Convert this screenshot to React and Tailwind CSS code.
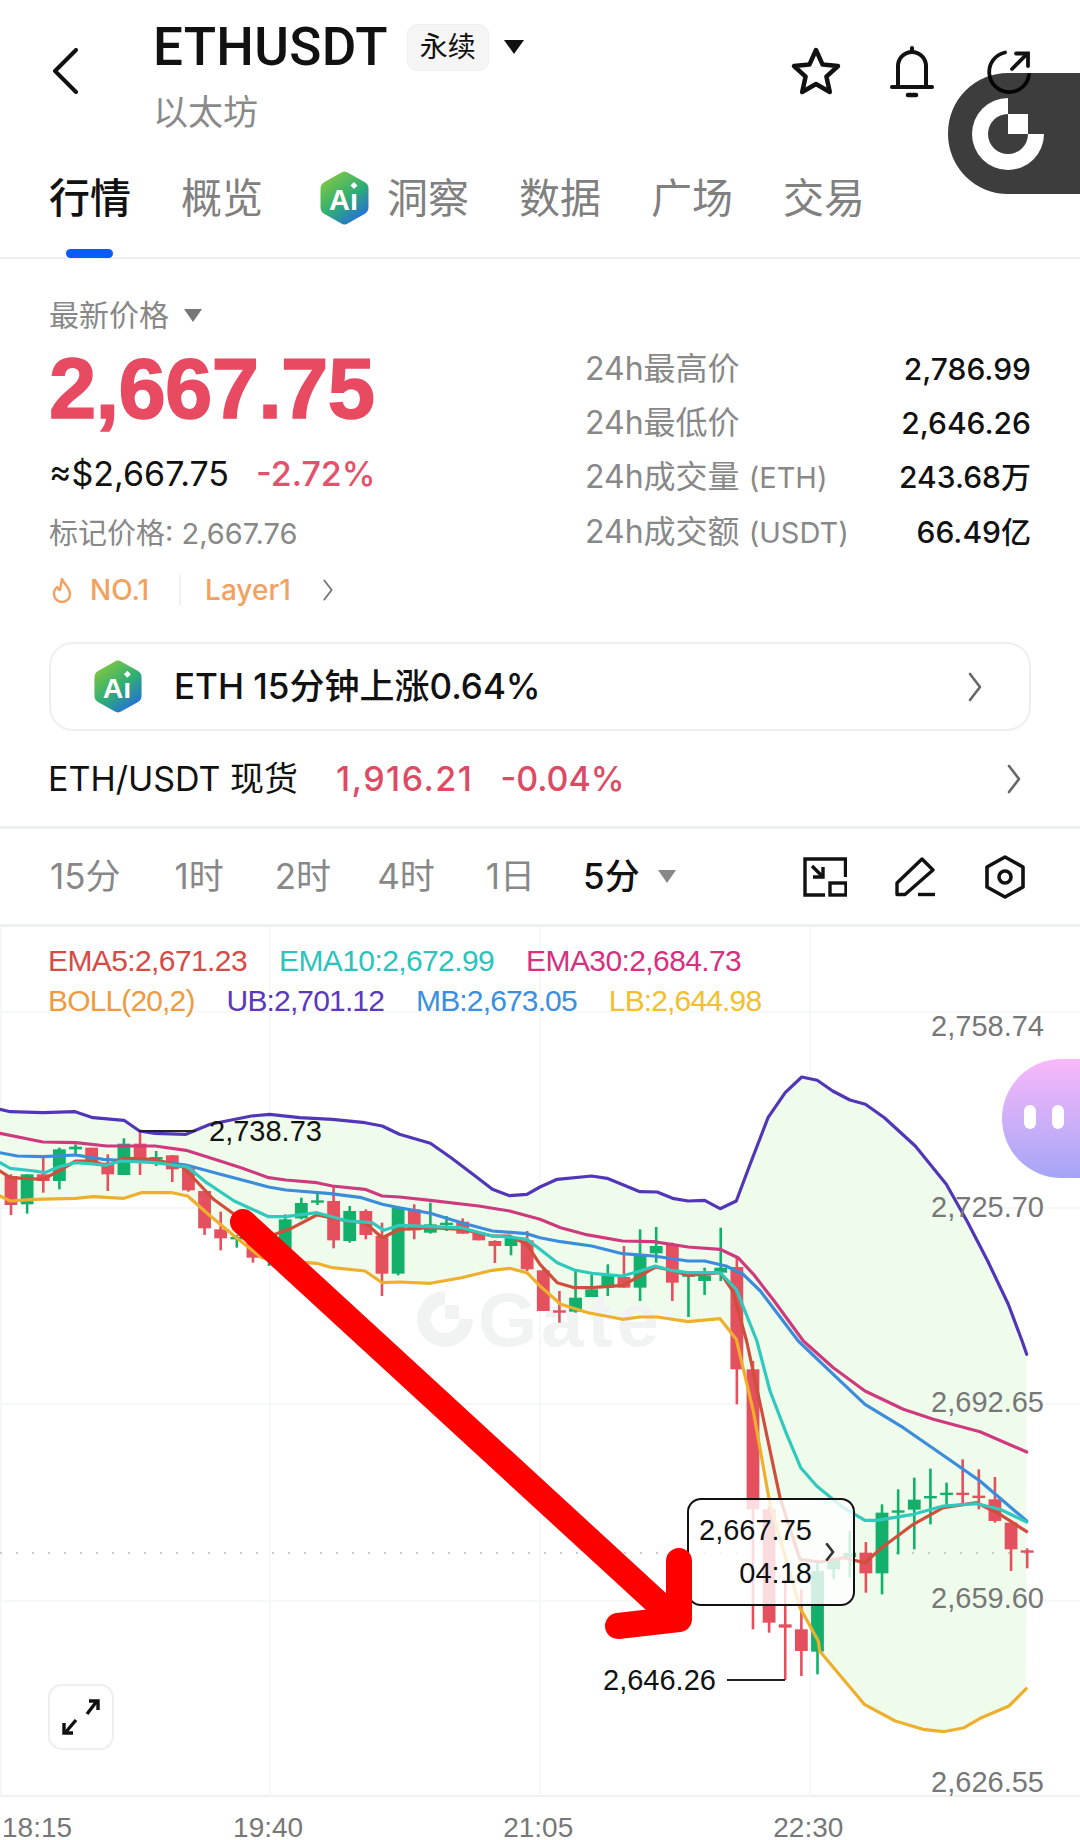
import React from "react";

// chart numbers were read off the reference, groups are [x, y] in crop units
const from4 = ([x, y]) => [x / 2.904, 1080 + y / 3];
const from5 = ([x, y]) => [540 + x / 2.904, 1040 + y / 3];
const from6 = ([x, y]) => [580 + x / 3, 1340 + y / 3];
const from7 = ([x, y]) => [x / 1.452, 1640 + y / 3];

const build = (a, b, c, d = []) => [
  ...a.map(from4),
  ...b.map(from5),
  ...c.map(from6),
  ...d.map(from7),
];

const ub = build(
  [[0,85],[30,92],[125,95],[218,92],[270,110],[360,118],[405,150],[450,157],[540,160],[610,130],[730,105],[783,100],[870,110],[965,115],[1060,125],[1110,135],[1160,160],[1250,187],[1310,230],[1380,285],[1430,325],[1480,344],[1530,340]],
  [[0,438],[50,415],[150,405],[195,412],[290,452],[340,453],[385,472],[430,480],[478,478],[523,503],[570,480],[610,370],[662,230],[712,155],[760,108],[805,118],[850,150],[900,177],[945,190],[1000,230],[1090,315],[1180,430],[1240,540],[1300,660],[1360,790],[1400,900]],
  [[1340,40]]
);
const lb = build(
  [[0,345],[30,360],[100,355],[220,352],[270,347],[360,352],[410,335],[500,335],[545,345],[600,395],[680,465],[760,530],[830,540],[920,547],[965,560],[1060,570],[1110,605],[1160,603],[1250,607],[1340,590],[1430,568],[1480,562],[1530,575]],
  [[0,735],[60,790],[140,815],[240,835],[290,828],[340,828],[430,842],[523,833],[570,895]],
  [[520,210],[570,490],[660,800],[715,900]],
  [[1190,30],[1255,190],[1300,240],[1340,265],[1370,272],[1400,260],[1425,230],[1465,195],[1490,143]]
);
const ema30 = build(
  [[0,157],[125,183],[220,185],[310,195],[450,195],[540,208],[630,237],[700,260],[780,290],[830,297],[920,305],[965,315],[1060,325],[1110,345],[1160,348],[1250,358],[1390,375],[1480,390]],
  [[0,535],[60,560],[130,580],[240,600],[330,602],[430,618],[523,625],[575,650],[620,700],[680,780],[765,900]],
  [[760,80],[855,150],[970,205],[1060,235],[1200,272],[1340,333]]
);
const mb = build(
  [[0,215],[50,225],[125,227],[220,222],[300,235],[350,238],[450,240],[540,252],[640,280],[780,318],[830,327],[960,338],[1050,350],[1110,370],[1160,380],[1250,397],[1340,425],[1430,450],[1530,458]],
  [[0,590],[60,602],[150,615],[240,638],[330,645],[430,660],[478,660],[540,675],[590,700],[640,750],[750,900]],
  [[760,100],[855,190],[970,260],[1100,350],[1200,420],[1340,540]]
);
const ema10 = build(
  [[0,245],[30,262],[100,270],[130,275],[170,258],[218,245],[260,248],[310,253],[350,240],[450,245],[545,258],[600,305],[680,360],[780,407],[830,407],[920,395],[1010,420],[1080,425],[1115,448],[1160,433],[1250,437],[1340,440],[1430,465],[1480,468],[1530,475]],
  [[0,625],[50,665],[100,687],[150,697],[240,705],[290,690],[335,675],[380,688],[430,695],[523,695],[570,745],[630,900]],
  [[570,150],[620,280],[662,380],[710,435],[790,500],[855,538],[890,538],[1000,520],[1090,495],[1190,488],[1260,505],[1340,543]]
);
const ema5 = build(
  [[0,270],[30,290],[125,295],[170,270],[220,240],[270,240],[310,255],[360,232],[450,235],[530,258],[570,300],[620,355],[680,400],[785,465],[850,440],[920,402],[1010,420],[1060,425],[1110,470],[1160,445],[1250,440],[1340,445],[1430,465],[1480,465],[1530,490]],
  [[0,670],[50,725],[100,740],[150,740],[240,733],[290,705],[335,678],[380,688],[430,703],[523,695],[560,750],[600,900]],
  [[545,210],[600,470],[660,655],[720,663],[790,650],[855,665],[905,620],[1000,550],[1090,500],[1190,485],[1260,520],[1340,572]]
);

// wick top, wick bottom, body top, body bottom, up?
const candlesA = [
  [280,402,285,372,0],[280,398,280,370,1],[230,335,280,300,0],[200,325,205,300,1],[190,225,197,205,1],[200,240,200,240,0],
  [220,330,245,280,0],[172,282,188,282,1],[150,282,188,232,0],[210,255,228,235,1],[222,303,223,265,0],[262,332,262,328,0],
  [330,462,330,442,0],[392,508,445,472,0],[462,500,468,472,1],[470,545,480,530,0],[480,555,480,530,1],[400,520,415,510,1],
  [350,415,366,412,1],[335,372,358,364,1],[315,502,360,478,0],[375,485,390,480,1],[385,475,390,462,0],[425,645,465,578,0],
  [380,583,380,578,1],[370,475,385,448,0],[365,458,430,455,1],[405,450,425,430,1],[412,458,422,458,0],[450,478,455,478,0],
  [478,546,480,495,0],[465,523,470,495,1],[450,570,478,565,0],[565,690,568,690,0],
];
const candlesB = [
  [750,845,808,815,0],[690,815,770,812,1],[700,768,745,768,1],[670,765,703,740,1],[615,740,708,740,0],[565,780,640,740,1],
  [558,665,615,637,1],[605,780,610,725,0],[695,828,700,705,1],[680,762,703,720,1],[560,720,680,695,1],
];
const candlesC = [
  [-250,190,-222,85,0],[60,865,85,505,0],[495,875,505,845,0],[720,1017,850,860,0],[745,1005,865,930,0],[660,1000,690,932,1],
  [650,715,655,685,1],[570,710,635,648,1],[603,755,635,697,0],[490,760,515,697,1],[445,640,508,514,1],[410,625,476,506,1],
  [383,550,465,470,1],[425,495,455,460,1],[355,490,455,460,0],[385,505,464,470,0],[408,545,475,540,0],[540,690,545,625,0],
  [622,682,628,634,0],
];
const candles = [
  ...candlesA.map((c) => [1080, c]),
  ...candlesB.map((c) => [1040, c]),
  ...candlesC.map((c) => [1340, c]),
];

const pts = (list) => list.map(([x, y]) => `${x.toFixed(1)},${y.toFixed(1)}`).join(" ");

function AiBadge({ id, className }) {
  return (
    <svg viewBox="0 0 50 56" className={className}>
      <defs>
        <linearGradient id={id} x1="0.1" y1="0" x2="0.8" y2="1">
          <stop offset="0" stopColor="#8ccb3c" />
          <stop offset="0.55" stopColor="#2fae74" />
          <stop offset="1" stopColor="#2468e4" />
        </linearGradient>
      </defs>
      <path d="M21 3 Q25 0 29 3 L45 12 Q49 14 49 19 L49 37 Q49 42 45 44 L29 53 Q25 56 21 53 L5 44 Q1 42 1 37 L1 19 Q1 14 5 12 Z" fill={`url(#${id})`} />
      <text x="24" y="40" textAnchor="middle" fontSize="29" fontWeight="700" fill="#fff" fontFamily="Liberation Sans, sans-serif">
        Aı
      </text>
      <path d="M34.5 12 L38 15.5 L34.5 19 L31 15.5 Z" fill="#fff" />
    </svg>
  );
}

function Chevron({ className, weight = 2.6 }) {
  return (
    <svg viewBox="0 0 16 30" className={className} fill="none" stroke="currentColor" strokeWidth={weight} strokeLinecap="round" strokeLinejoin="round">
      <path d="M3 2 L13 15 L3 28" />
    </svg>
  );
}

function Chart() {
  return (
    <div className="relative h-[870px] border-b-2 border-[#eeeff0] font-['Liberation_Sans','Noto_Sans_CJK_SC',sans-serif]">
      <svg viewBox="0 926 1080 870" className="absolute left-0 top-0 h-[870px] w-[1080px] overflow-visible">
        <g stroke="#f3f4f5" strokeWidth="1.5">
          <line x1="1" y1="926" x2="1" y2="1796" />
          <line x1="270" y1="926" x2="270" y2="1796" />
          <line x1="540" y1="926" x2="540" y2="1796" />
          <line x1="810" y1="926" x2="810" y2="1796" />
          <line x1="0" y1="1011" x2="1080" y2="1011" />
          <line x1="0" y1="1207" x2="1080" y2="1207" />
          <line x1="0" y1="1403" x2="1080" y2="1403" />
          <line x1="0" y1="1600" x2="1080" y2="1600" />
        </g>
        <polygon points={pts([...ub, ...[...lb].reverse()])} fill="#effcec" />

        {/* watermark */}
        <g fill="#f1f3f3">
          <path d="M445 1290 A28 28 0 1 0 473 1318 L459 1318 A14 14 0 1 1 445 1304 Z" />
          <rect x="445" y="1304" width="14" height="14" />
          <text x="478" y="1345" fontSize="76" fontWeight="700" letterSpacing="4" fontFamily="Liberation Sans, sans-serif">Gate</text>
        </g>

        <line x1="0" y1="1552" x2="1035" y2="1552" stroke="#c9cdd0" strokeWidth="2" strokeDasharray="2 14" />

        {candles.map(([y0, [wt, wb, bt, bb, up]], i) => {
          const x = 11 + 16.13 * i;
          const color = up ? "#13b06b" : "#e5505f";
          return (
            <g key={i} fill={color} stroke="none">
              <rect x={x - 1.3} y={y0 + wt / 3} width="2.6" height={(wb - wt) / 3} />
              <rect x={x - 6.4} y={y0 + bt / 3} width="12.8" height={Math.max((bb - bt) / 3, 2.4)} />
            </g>
          );
        })}

        <g fill="none" strokeWidth="3.2" strokeLinejoin="round" strokeLinecap="round">
          <polyline points={pts(ub)} stroke="#5236b8" />
          <polyline points={pts(lb)} stroke="#eeb02c" />
          <polyline points={pts(ema30)} stroke="#cf3a7f" />
          <polyline points={pts(mb)} stroke="#3b8ddb" />
          <polyline points={pts(ema5)} stroke="#cf4f3c" />
          <polyline points={pts(ema10)} stroke="#2fcabd" />
        </g>

        <line x1="139" y1="1130" x2="196" y2="1130" stroke="#222" strokeWidth="2" />
        <line x1="727" y1="1679" x2="785" y2="1679" stroke="#222" strokeWidth="2" />
        <g fontSize="29" fontFamily="Liberation Sans, sans-serif" fill="#111">
          <text x="209" y="1140">2,738.73</text>
          <text x="603" y="1689">2,646.26</text>
        </g>
        <g fontSize="29" fontFamily="Liberation Sans, sans-serif" fill="#777" textAnchor="end">
          <text x="1044" y="1035">2,758.74</text>
          <text x="1044" y="1216">2,725.70</text>
          <text x="1044" y="1411">2,692.65</text>
          <text x="1044" y="1607">2,659.60</text>
          <text x="1044" y="1791">2,626.55</text>
        </g>
      </svg>

      {/* legend */}
      <div className="relative px-[48px] pt-[14px] text-[30px] leading-[40px]">
        <div className="flex gap-[32px] tracking-[-0.6px]">
          <span className="text-[#d84a45]">EMA5:2,671.23</span>
          <span className="text-[#2bc4bd]">EMA10:2,672.99</span>
          <span className="text-[#d6307f]">EMA30:2,684.73</span>
        </div>
        <div className="flex gap-[32px] tracking-[-0.85px]">
          <span className="text-[#ef9b3b]">BOLL(20,2)</span>
          <span className="text-[#5a39c0]">UB:2,701.12</span>
          <span className="text-[#3a90e0]">MB:2,673.05</span>
          <span className="text-[#f2c02c]">LB:2,644.98</span>
        </div>
      </div>

      {/* current price tag */}
      <div className="absolute left-[687px] top-[571px] flex h-[108px] w-[168px] items-center rounded-[14px] border-2 border-[#111] bg-white/80 pl-[10px]">
        <div className="flex flex-col items-end text-[29px] leading-[43px] text-[#111]">
          <span>2,667.75</span>
          <span>04:18</span>
        </div>
        <Chevron className="ml-[13px] h-[18px] w-[10px] text-[#333]" weight={4.5} />
      </div>

      {/* hand drawn arrow */}
      <svg viewBox="0 926 1080 870" className="absolute left-0 top-0 h-[870px] w-[1080px]">
        <g fill="none" stroke="#ff0000" strokeWidth="26" strokeLinecap="round" strokeLinejoin="round">
          <line x1="243" y1="1221" x2="675" y2="1618" />
          <polyline points="679,1560 679,1618 618,1625" />
        </g>
      </svg>

      <button className="absolute left-[48px] top-[757px] flex h-[66px] w-[66px] items-center justify-center rounded-[14px] border-2 border-[#eeeff0] bg-white">
        <svg viewBox="0 0 38 36" className="h-[36px] w-[38px]" fill="none" stroke="#111" strokeWidth="3.4">
          <path d="M35 2 L25 15" />
          <path d="M27 2 H36 V11" />
          <path d="M3 34 L14 21" />
          <path d="M2 24 V34 H11" />
        </svg>
      </button>
    </div>
  );
}

export default function App() {
  return (
    <div className="relative h-[1840px] w-[1080px] overflow-hidden bg-white font-['Inter','Noto_Sans_CJK_SC',sans-serif] text-[#111]">
      {/* title bar */}
      <div className="flex h-[148px] items-start">
        <svg viewBox="0 0 26 46" className="ml-[52px] mt-[48px] h-[46px] w-[26px]" fill="none" stroke="#111" strokeWidth="4" strokeLinecap="round" strokeLinejoin="round">
          <path d="M24 2 L3 23 L24 44" />
        </svg>
        <div className="ml-[75px] pt-[18px]">
          <div className="flex items-center">
            <span className="font-['Roboto'] text-[53px] font-medium leading-[58px] tracking-[0.3px]">ETHUSDT</span>
            <span className="ml-[19px] flex h-[47px] w-[82px] items-center justify-center rounded-[10px] border border-[#eeeff0] bg-[#f5f5f6] text-[28px]">永续</span>
            <span className="ml-[15px] h-0 w-0 border-x-[10px] border-t-[14px] border-x-transparent border-t-[#111]" />
          </div>
          <div className="mt-[16px] text-[35px] leading-[40px] text-[#8a8a8a]">以太坊</div>
        </div>
        <div className="ml-auto flex items-start pt-[46px]">
          <svg viewBox="0 0 52 50" className="h-[50px] w-[52px]" fill="none" stroke="#111" strokeWidth="4.5" strokeLinejoin="round">
            <path d="M26 4 L32.6 18.6 L48 20 L36.4 30.6 L39.8 46 L26 38 L12.2 46 L15.6 30.6 L4 20 L19.4 18.6 Z" />
          </svg>
          <svg viewBox="0 0 44 52" className="ml-[48px] h-[52px] w-[44px]" fill="none" stroke="#111" strokeWidth="4" strokeLinecap="round">
            <path d="M22 2 V6" />
            <path d="M8 40 V20 A14 14 0 0 1 36 20 V40" />
            <path d="M2 41 H42" />
            <path d="M18 49 H26" strokeWidth="4.5" />
          </svg>
          <svg viewBox="0 0 48 48" className="ml-[49px] mr-[49px] mt-[4px] h-[48px] w-[48px]" fill="none" stroke="#111" strokeWidth="3.8" strokeLinecap="round" strokeLinejoin="miter">
            <path d="M22 2.5 A20 20 0 1 0 46 25" />
            <path d="M29 19 L44 4" />
            <path d="M33 3.5 H45 V16" />
          </svg>
        </div>
      </div>

      {/* tabs */}
      <div className="relative flex h-[111px] items-start gap-[50px] border-b-2 border-[#eeeff0] pl-[49px] pt-[24px] text-[41px] leading-[52px] text-[#808080]">
        <span className="font-medium text-[#111]">行情</span>
        <span>概览</span>
        <span className="ml-[6px] flex items-center gap-[17px]">
          <AiBadge id="aiTab" className="-my-[4px] h-[56px] w-[51px]" />
          洞察
        </span>
        <span>数据</span>
        <span>广场</span>
        <span>交易</span>
        <span className="absolute bottom-[-1px] left-[66px] h-[9px] w-[47px] rounded-full bg-[#0a5cf5]" />
      </div>

      {/* last price and 24h stats */}
      <div className="flex justify-between pl-[49px] pr-[49px] pt-[38px]">
        <div>
          <div className="flex items-center text-[30px] leading-[36px] text-[#888]">
            最新价格
            <span className="ml-[15px] h-0 w-0 border-x-[9px] border-t-[13px] border-x-transparent border-t-[#777]" />
          </div>
          <div className="mt-[8px] font-['Liberation_Sans'] text-[85px] font-bold leading-[96px] tracking-[-0.7px] text-[#e84a62] [-webkit-text-stroke:1.5px_#e84a62]">2,667.75</div>
          <div className="mt-[15px] flex items-center text-[34px] leading-[44px]">
            <span>≈$2,667.75</span>
            <span className="ml-[27px] font-medium text-[#e5516b]">-2.72%</span>
          </div>
          <div className="mt-[18px] text-[29px] leading-[40px] text-[#888]">标记价格: 2,667.76</div>
          <div className="mt-[16px] flex items-center text-[28px] leading-[40px] text-[#f3a160]">
            <svg viewBox="0 0 20 26" className="ml-[3px] h-[26px] w-[20px]" fill="none" stroke="#f3a160" strokeWidth="2.4" strokeLinejoin="round">
              <path d="M10 2 C12 7 18 11 18 17 A8 8 0 0 1 2 17 C2 14 4 11 5.5 10 C6 12 7 13 8 13 C9 9 9 5 10 2 Z" />
            </svg>
            <span className="ml-[18px] font-medium">NO.1</span>
            <span className="ml-[30px] h-[30px] w-[2px] bg-[#f0f0f0]" />
            <span className="ml-[24px] font-medium">Layer1</span>
            <Chevron className="ml-[31px] h-[22px] w-[12px] text-[#777]" />
          </div>
        </div>
        <div className="w-[446px] pt-[45px] text-[32px] leading-[54px]">
          <div className="flex justify-between"><span className="text-[#888]">24h最高价</span><span className="text-[30px] font-medium">2,786.99</span></div>
          <div className="flex justify-between"><span className="text-[#888]">24h最低价</span><span className="text-[30px] font-medium">2,646.26</span></div>
          <div className="flex justify-between"><span className="text-[#888]">24h成交量 <span className="text-[29px]">(ETH)</span></span><span className="text-[30px] font-medium">243.68万</span></div>
          <div className="flex justify-between"><span className="text-[#888]">24h成交额 <span className="text-[29px]">(USDT)</span></span><span className="text-[30px] font-medium">66.49亿</span></div>
        </div>
      </div>

      {/* ai summary */}
      <div className="mx-[49px] mt-[32px] flex h-[89px] items-center rounded-[24px] border-2 border-[#eeeff0] pl-[42px] pr-[46px]">
        <AiBadge id="aiRow" className="h-[55px] w-[50px]" />
        <span className="ml-[31px] text-[35px] font-medium">ETH 15分钟上涨0.64%</span>
        <Chevron className="ml-auto h-[30px] w-[16px] text-[#666]" />
      </div>

      {/* spot link */}
      <div className="flex h-[98px] items-center border-b-[3px] border-[#eeeff0] pl-[48px] pr-[58px] text-[34px]">
        <span>ETH/USDT 现货</span>
        <span className="ml-[38px] font-medium tracking-[1.5px] text-[#dc4a64]">1,916.21</span>
        <span className="ml-[27px] font-medium text-[#dc4a64]">-0.04%</span>
        <Chevron className="ml-auto h-[30px] w-[16px] text-[#666]" />
      </div>

      {/* intervals */}
      <div className="flex h-[98px] items-center border-b-[3px] border-[#eeeff0] pl-[50px] pr-[55px] text-[35px] text-[#888]">
        <span>15分</span>
        <span className="ml-[54px]">1时</span>
        <span className="ml-[51px]">2时</span>
        <span className="ml-[46px]">4时</span>
        <span className="ml-[51px]">1日</span>
        <span className="ml-[48px] font-medium text-[#111]">5分</span>
        <span className="ml-[18px] h-0 w-0 border-x-[9px] border-t-[13px] border-x-transparent border-t-[#888]" />
        <svg viewBox="0 0 44 40" className="ml-auto h-[40px] w-[44px]" fill="none" stroke="#111" strokeWidth="3.4">
          <path d="M42.5 20 V2 H2 V38 H22" />
          <rect x="27" y="26" width="16" height="12" />
          <path d="M9 9 L20 20" />
          <path d="M10 20 H20 V10" />
        </svg>
        <svg viewBox="0 0 40 40" className="ml-[48px] h-[40px] w-[40px]" fill="none" stroke="#111" strokeWidth="3.4" strokeLinejoin="round">
          <path d="M27 2 L38 13 L10 37.5 H2 V26 Z" />
          <path d="M23 37.5 H40" />
        </svg>
        <svg viewBox="0 0 40 44" className="ml-[50px] h-[44px] w-[40px]" fill="none" stroke="#111" strokeWidth="3.6" strokeLinejoin="round">
          <path d="M20 2 L38 12 V32 L20 42 L2 32 V12 Z" />
          <circle cx="20" cy="22" r="6" />
        </svg>
      </div>

      <Chart />

      {/* time axis */}
      <div className="flex h-[42px] items-start gap-[200px] pl-[2px] pt-[21px] font-['Liberation_Sans'] text-[28px] leading-[20px] text-[#777]">
        <span className="-mr-[39px]">18:15</span>
        <span>19:40</span>
        <span>21:05</span>
        <span>22:30</span>
      </div>

      {/* floating gate button, see-through so the share icon still shows */}
      <div className="absolute right-0 top-[73px] flex h-[121px] w-[132px] items-center rounded-l-[60px] bg-black/76 pl-[24px]">
        <svg viewBox="0 0 72 72" className="h-[72px] w-[72px]" fill="#fff">
          <path d="M36 0 A36 36 0 1 0 72 36 L56 36 A20 20 0 1 1 36 16 Z" />
          <rect x="36" y="16" width="20" height="20" />
        </svg>
      </div>

      {/* floating assistant */}
      <div className="absolute right-0 top-[1059px] flex h-[119px] w-[78px] gap-[16px] rounded-l-[60px] bg-gradient-to-b from-[#f8b8fa] to-[#a5a5f6] pl-[22px] pt-[46px]">
        <span className="h-[24px] w-[12px] rounded-full bg-white" />
        <span className="h-[24px] w-[12px] rounded-full bg-white" />
      </div>
    </div>
  );
}
